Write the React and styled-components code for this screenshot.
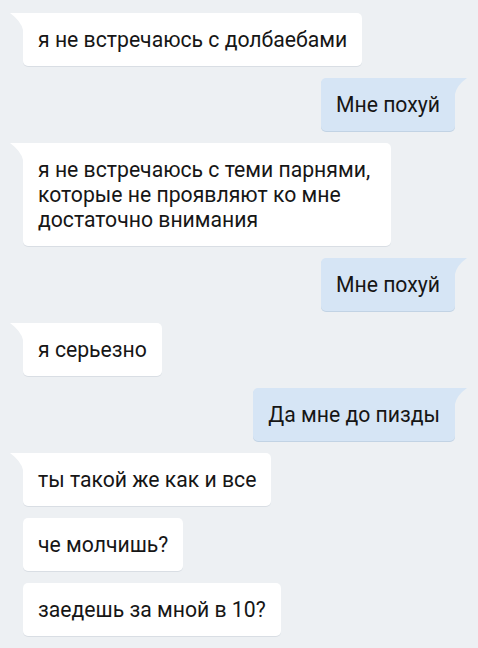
import React from "react";
import styled, { createGlobalStyle, css } from "styled-components";

const messages = [
  { out: false, tail: true, text: "я не встречаюсь с долбаебами" },
  { out: true, tail: true, text: "Мне похуй" },
  { out: false, tail: true, text: "я не встречаюсь с теми парнями, которые не проявляют ко мне достаточно внимания" },
  { out: true, tail: true, text: "Мне похуй" },
  { out: false, tail: true, text: "я серьезно" },
  { out: true, tail: true, text: "Да мне до пизды" },
  { out: false, tail: true, text: "ты такой же как и все" },
  { out: false, tail: false, text: "че молчишь?" },
  { out: false, tail: false, text: "заедешь за мной в 10?" },
];

const App = () => {
  return (
    <>
      <GlobalStyle />
      <Chat>
        {messages.map((m, i) => (
          <Row key={i} out={m.out}>
            <Bubble out={m.out} tail={m.tail}>
              {m.text}
            </Bubble>
          </Row>
        ))}
      </Chat>
    </>
  );
};

const GlobalStyle = createGlobalStyle`
  html, body {
    margin: 0;
    padding: 0;
    background: #edf0f3;
  }
  body {
    font-family: Roboto, "Noto Sans", sans-serif;
  }
`;

const Chat = styled.div`
  width: 478px;
  height: 648px;
  box-sizing: border-box;
  padding: 13px 23px 0;
  display: flex;
  flex-direction: column;
  gap: 12px;
  overflow: hidden;
`;

const Row = styled.div`
  display: flex;
  justify-content: ${p => p.out ? "flex-end" : "flex-start"};
`;

const Bubble = styled.div`
  position: relative;
  max-width: 338px;
  padding: 14px 15px;
  font-size: 21.2px;
  line-height: 25px;
  color: #161616;
  background: #ffffff;
  border-radius: 5px;
  box-shadow: 0 1px 0 #d9dee4;

  ${p => p.out && css`
    background: #d6e5f5;
    box-shadow: 0 1px 0 #c2d3e4;
  `}

  ${p => p.tail && !p.out && css`
    border-top-left-radius: 0;
    &::before {
      content: "";
      position: absolute;
      top: 0;
      left: -13px;
      width: 13px;
      height: 17px;
      background: #ffffff;
      clip-path: path("M0 0 H13 V17 Q11 8 0 0 Z");
    }
  `}

  ${p => p.tail && p.out && css`
    border-top-right-radius: 0;
    &::before {
      content: "";
      position: absolute;
      top: 0;
      right: -12px;
      width: 12px;
      height: 16px;
      background: #d6e5f5;
      clip-path: path("M0 0 H12 Q2 7 0 16 Z");
    }
  `}
`;

export default App;
